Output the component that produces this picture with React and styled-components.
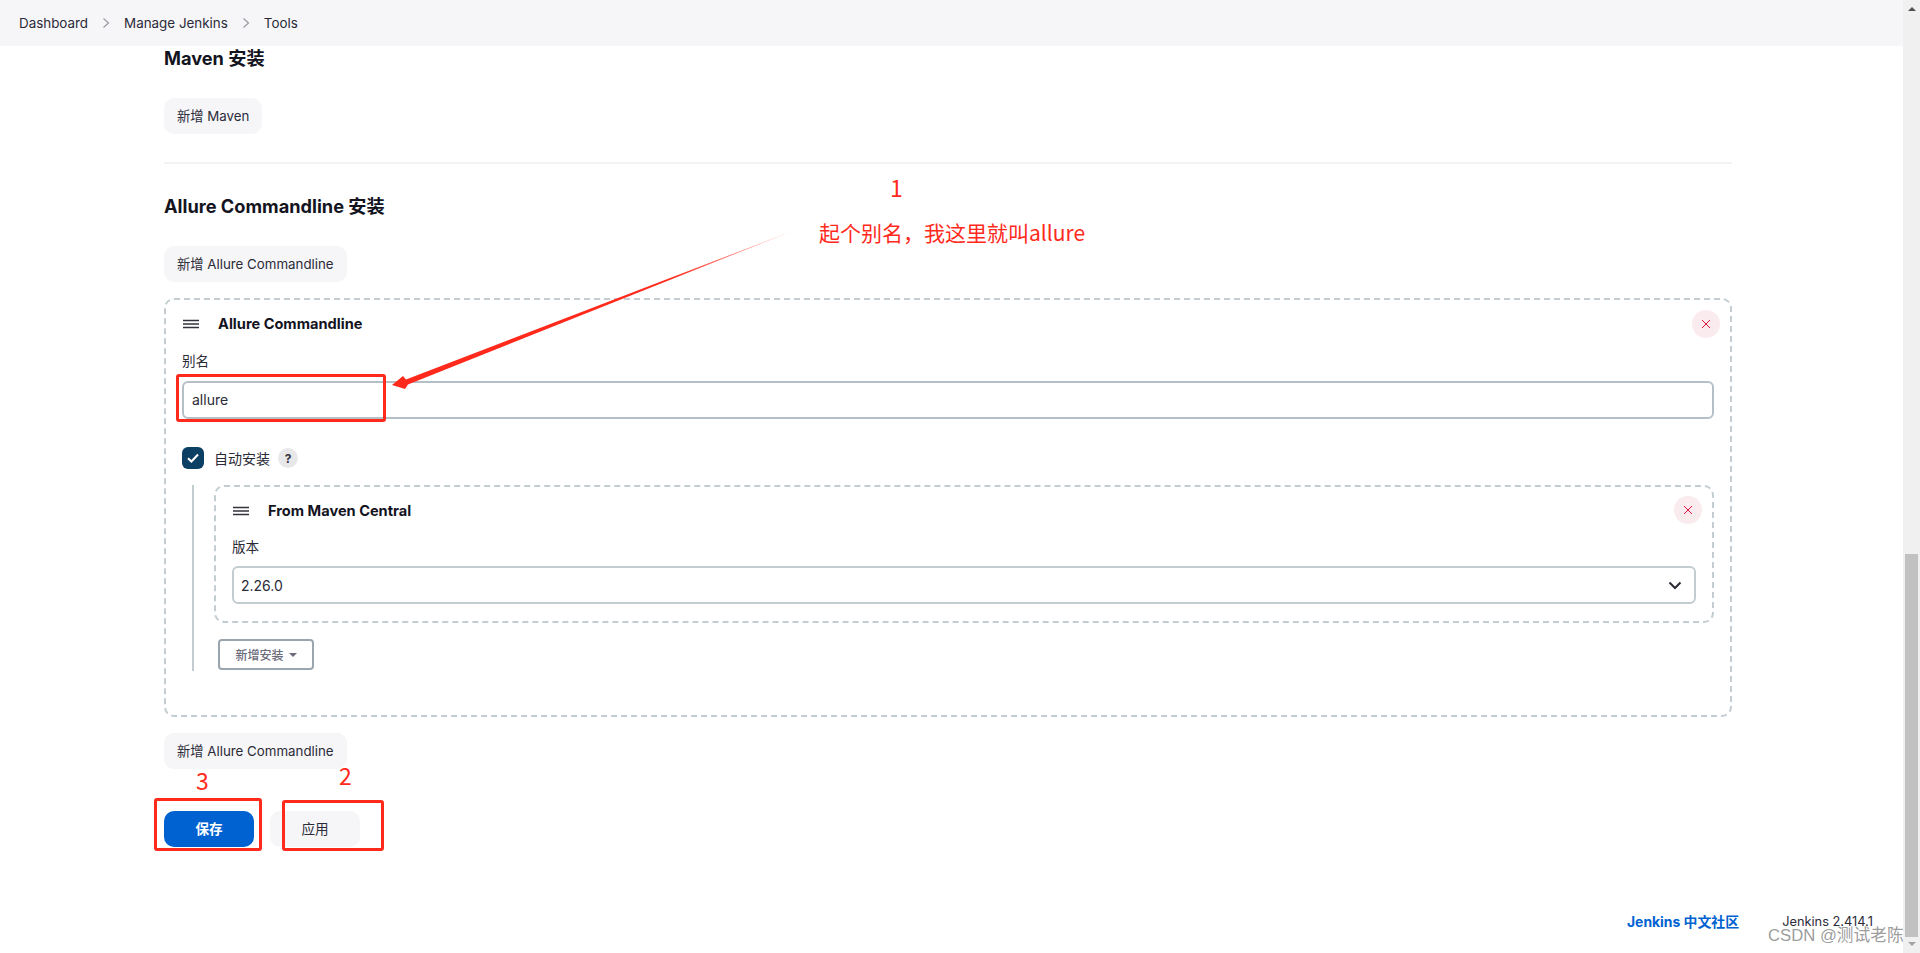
import React from "react";
import styled, { createGlobalStyle } from "styled-components";

const FONT = `Inter, "Noto Sans CJK SC", sans-serif`;
const RED = "#ff2a1c";

const Global = createGlobalStyle`
  html, body { margin: 0; height: 100%; overflow: hidden; background: #fff; }
  * { box-sizing: border-box; }
  body { font-family: ${FONT}; color: #14141f; font-size: 14px; }
`;

const Page = styled.div`
  position: relative;
  display: flex;
  width: 1920px;
  height: 953px;
  overflow: hidden;
`;
const Viewport = styled.div`
  flex: 1;
  display: flex;
  flex-direction: column;
  min-width: 0;
`;
const TopBar = styled.header`
  height: 46px;
  flex: none;
  background: #f6f6f8;
  display: flex;
  align-items: center;
  gap: 13px;
  padding: 0 0 1px 19px;
  font-size: 13.4px;
  color: #2b2b38;
`;
const Crumb = styled.span``;
const Chevron = styled.svg`
  width: 10px;
  height: 14px;
  fill: none;
  stroke: #9a9aa5;
  stroke-width: 1.2;
`;
const Content = styled.main`
  width: 1568px;
  margin-left: 164px;
  flex: 1;
  display: flex;
  flex-direction: column;
  align-items: flex-start;
`;
const SectionTitle = styled.h2`
  margin: ${(p) => p.$top}px 0 0;
  font-size: 18.2px;
  line-height: 22px;
  font-weight: 700;
  color: #14141f;
`;
const GhostButton = styled.button`
  margin-top: ${(p) => p.$top}px;
  height: 36px;
  padding: 0 13px 2px;
  border: 0;
  border-radius: 10px;
  background: #f6f6f8;
  font: 400 13.3px ${FONT};
  color: #2b2b38;
`;
const Divider = styled.hr`
  align-self: stretch;
  margin: 28px 0 0;
  border: 0;
  height: 2px;
  background: #f3f3f6;
`;
const Card = styled.section`
  position: relative;
  border: 2px dashed #c3ccd1;
  border-radius: 10px;
  align-self: stretch;
  margin-top: ${(p) => p.$top || 0}px;
  padding: ${(p) => p.$pad};
  height: ${(p) => p.$height}px;
`;
const CardHead = styled.div`
  display: flex;
  align-items: center;
  height: 22px;
  font-size: 14.6px;
  font-weight: 700;
  color: #14141f;
`;
const Handle = styled.svg`
  width: 16px;
  height: 10px;
  margin: 0 19px 0 1px;
  flex: none;
  stroke: #33333f;
  stroke-width: 1.4;
`;
const CloseButton = styled.span`
  position: absolute;
  top: ${(p) => p.$top}px;
  right: ${(p) => p.$right}px;
  width: 28px;
  height: 28px;
  border-radius: 50%;
  background: #faecee;
  display: flex;
  align-items: center;
  justify-content: center;
`;
const FieldLabel = styled.label`
  display: block;
  margin-top: ${(p) => p.$top}px;
  font-size: 13.6px;
  line-height: 18px;
  color: #2b2b38;
`;
const TextBox = styled.div`
  margin-top: ${(p) => p.$top}px;
  height: ${(p) => p.$height}px;
  border: 2px solid ${(p) => p.$border};
  border-radius: 6px;
  display: flex;
  align-items: center;
  justify-content: space-between;
  padding: ${(p) => p.$pad};
  font-size: 14px;
  color: #2b2b38;
`;
const CheckRow = styled.div`
  display: flex;
  align-items: center;
  margin-top: 28px;
  height: 22px;
  font-size: 14px;
  color: #2b2b38;
`;
const CheckBox = styled.span`
  width: 22px;
  height: 22px;
  border-radius: 6px;
  background: #0b3f63;
  display: flex;
  align-items: center;
  justify-content: center;
  margin-right: 10px;
`;
const Help = styled.span`
  width: 20px;
  height: 20px;
  margin-left: 8px;
  border-radius: 50%;
  background: #e8e8ea;
  display: flex;
  align-items: center;
  justify-content: center;
  font-size: 12px;
  font-weight: 700;
  color: #33333f;
`;
const Nested = styled.div`
  margin: 16px 0 0 10px;
  border-left: 2px solid #c3ccd1;
  height: 186px;
  padding-left: 20px;
`;
const OutlineButton = styled.button`
  display: flex;
  align-items: center;
  gap: 5px;
  margin: 16px 0 0 4px;
  height: 31px;
  width: 96px;
  justify-content: center;
  border: 2px solid #9aa5ae;
  border-radius: 4px;
  background: #fff;
  font: 500 12px ${FONT};
  color: #6b6b7b;
`;
const Caret = styled.i`
  width: 0;
  height: 0;
  border: 4px solid transparent;
  border-top-color: #6b6b7b;
  border-bottom: 0;
`;
const Actions = styled.div`
  display: flex;
  gap: 16px;
  margin-top: 42px;
`;
const ActionButton = styled.button`
  width: 90px;
  height: 36px;
  padding: 0 0 2px;
  border: 0;
  border-radius: 10px;
  background: ${(p) => (p.$primary ? "#0062d1" : "#f6f6f8")};
  color: ${(p) => (p.$primary ? "#fff" : "#2b2b38")};
  font: ${(p) => (p.$primary ? 700 : 400)} 13.6px ${FONT};
`;
const Footer = styled.footer`
  position: absolute;
  top: 911px;
  left: 1627px;
  display: flex;
  align-items: center;
  gap: 43px;
  height: 20px;
`;
const FooterLink = styled.a`
  color: #0062d1;
  font-weight: 700;
  font-size: 13.9px;
`;
const Version = styled.span`
  color: #2b2b38;
  font-size: 12.8px;
`;
const Watermark = styled.span`
  position: absolute;
  left: 1768px;
  top: 926px;
  font: 16.7px/20px "Liberation Sans", "Noto Sans CJK SC", sans-serif;
  color: rgba(90, 90, 90, 0.62);
  white-space: nowrap;
`;
const Scrollbar = styled.aside`
  width: 17px;
  flex: none;
  background: #f0f0f0;
  position: relative;
  display: flex;
  flex-direction: column;
  padding: 7px 2px 0;
`;
const ArrowUp = styled.i`
  display: block;
  width: 0;
  height: 0;
  margin: 0 auto;
  border: 4px solid transparent;
  border-bottom: 4px solid #505050;
  border-top: 0;
`;
const Thumb = styled.div`
  height: 383px;
  margin-top: 543px;
  background: #c1c1c1;
`;
const ArrowDown = styled.i`
  display: block;
  width: 0;
  height: 0;
  margin: 5px auto 0;
  border: 4px solid transparent;
  border-top: 4px solid #a3a3a3;
  border-bottom: 0;
`;
const Box = styled.div`
  position: absolute;
  left: ${(p) => p.$x}px;
  top: ${(p) => p.$y}px;
  width: ${(p) => p.$w}px;
  height: ${(p) => p.$h}px;
  border: 3px solid ${RED};
  border-radius: 3px;
`;
const Note = styled.span`
  position: absolute;
  left: ${(p) => p.$x}px;
  top: ${(p) => p.$y}px;
  font: ${(p) => p.$size}px/1.2 "Noto Sans CJK SC", "Noto Sans", sans-serif;
  color: ${RED};
  white-space: nowrap;
`;
const ArrowLayer = styled.svg`
  position: absolute;
  left: 0;
  top: 0;
  width: 1920px;
  height: 953px;
  pointer-events: none;
`;

const HandleIcon = () => (
  <Handle viewBox="0 0 16 10">
    <path d="M0 1.5h16M0 5h16M0 8.5h16" />
  </Handle>
);
const Cross = () => (
  <svg width="10" height="10" viewBox="0 0 10 10" stroke="#e0103c" strokeWidth="1" fill="none">
    <path d="M1 1l8 8M9 1l-8 8" />
  </svg>
);
const Sep = () => (
  <Chevron viewBox="0 0 10 14">
    <path d="M2.5 2.5L7.5 7l-5 4.5" />
  </Chevron>
);

export default function App() {
  return (
    <Page>
      <Global />
      <Viewport>
        <TopBar>
          <Crumb>Dashboard</Crumb>
          <Sep />
          <Crumb>Manage Jenkins</Crumb>
          <Sep />
          <Crumb>Tools</Crumb>
        </TopBar>
        <Content>
          <SectionTitle $top={1}>Maven 安装</SectionTitle>
          <GhostButton $top={29}>新增 Maven</GhostButton>
          <Divider />
          <SectionTitle $top={31}>Allure Commandline 安装</SectionTitle>
          <GhostButton $top={29}>新增 Allure Commandline</GhostButton>
          <Card $top={16} $height={419} $pad="13px 16px 0">
            <CardHead>
              <HandleIcon />
              Allure Commandline
            </CardHead>
            <CloseButton $top={10} $right={10}>
              <Cross />
            </CloseButton>
            <FieldLabel $top={17}>别名</FieldLabel>
            <TextBox $top={11} $height={38} $border="#b4bfc7" $pad="0 12px 1px 8px">allure</TextBox>
            <CheckRow>
              <CheckBox>
                <svg width="12" height="10" viewBox="0 0 12 10" fill="none" stroke="#fff" strokeWidth="2">
                  <path d="M1 5.2l3.4 3.3L11 1.5" />
                </svg>
              </CheckBox>
              自动安装
              <Help>?</Help>
            </CheckRow>
            <Nested>
              <Card $height={138} $pad="13px 16px 0">
                <CardHead>
                  <HandleIcon />
                  From Maven Central
                </CardHead>
                <CloseButton $top={9} $right={10}>
                  <Cross />
                </CloseButton>
                <FieldLabel $top={16}>版本</FieldLabel>
                <TextBox $top={10} $height={38} $border="#c3ccd1" $pad="0 12px 0 7px">
                  2.26.0
                  <svg width="14" height="9" viewBox="0 0 14 9" fill="none" stroke="#2b2b38" strokeWidth="2">
                    <path d="M1.5 1.5L7 7l5.5-5.5" />
                  </svg>
                </TextBox>
              </Card>
              <OutlineButton>
                新增安装
                <Caret />
              </OutlineButton>
            </Nested>
          </Card>
          <GhostButton $top={16}>新增 Allure Commandline</GhostButton>
          <Actions>
            <ActionButton $primary>保存</ActionButton>
            <ActionButton>应用</ActionButton>
          </Actions>
        </Content>
      </Viewport>
      <Scrollbar>
        <ArrowUp />
        <Thumb />
        <ArrowDown />
      </Scrollbar>
      <Footer>
        <FooterLink>Jenkins 中文社区</FooterLink>
        <Version>Jenkins 2.414.1</Version>
      </Footer>
      <Watermark>CSDN @测试老陈</Watermark>
      <ArrowLayer viewBox="0 0 1920 953">
        <defs>
          <linearGradient id="tail" gradientUnits="userSpaceOnUse" x1="795" y1="230" x2="670" y2="278">
            <stop offset="0" stopColor={RED} stopOpacity="0.25" />
            <stop offset="1" stopColor={RED} />
          </linearGradient>
        </defs>
        <polygon points="392,385 403,376 406,379.5 795,230 408,384.5 405,389" fill="url(#tail)" />
      </ArrowLayer>
      <Box $x={154} $y={798} $w={108} $h={53} />
      <Box $x={282} $y={800} $w={102} $h={51} />
      <Box $x={176} $y={374} $w={210} $h={48} />
      <Note $x={890} $y={174} $size={23}>1</Note>
      <Note $x={819} $y={220} $size={21}>{"起个别名\uFF0C我这里就叫allure"}</Note>
      <Note $x={196} $y={767} $size={23}>3</Note>
      <Note $x={339} $y={762} $size={23}>2</Note>
    </Page>
  );
}
